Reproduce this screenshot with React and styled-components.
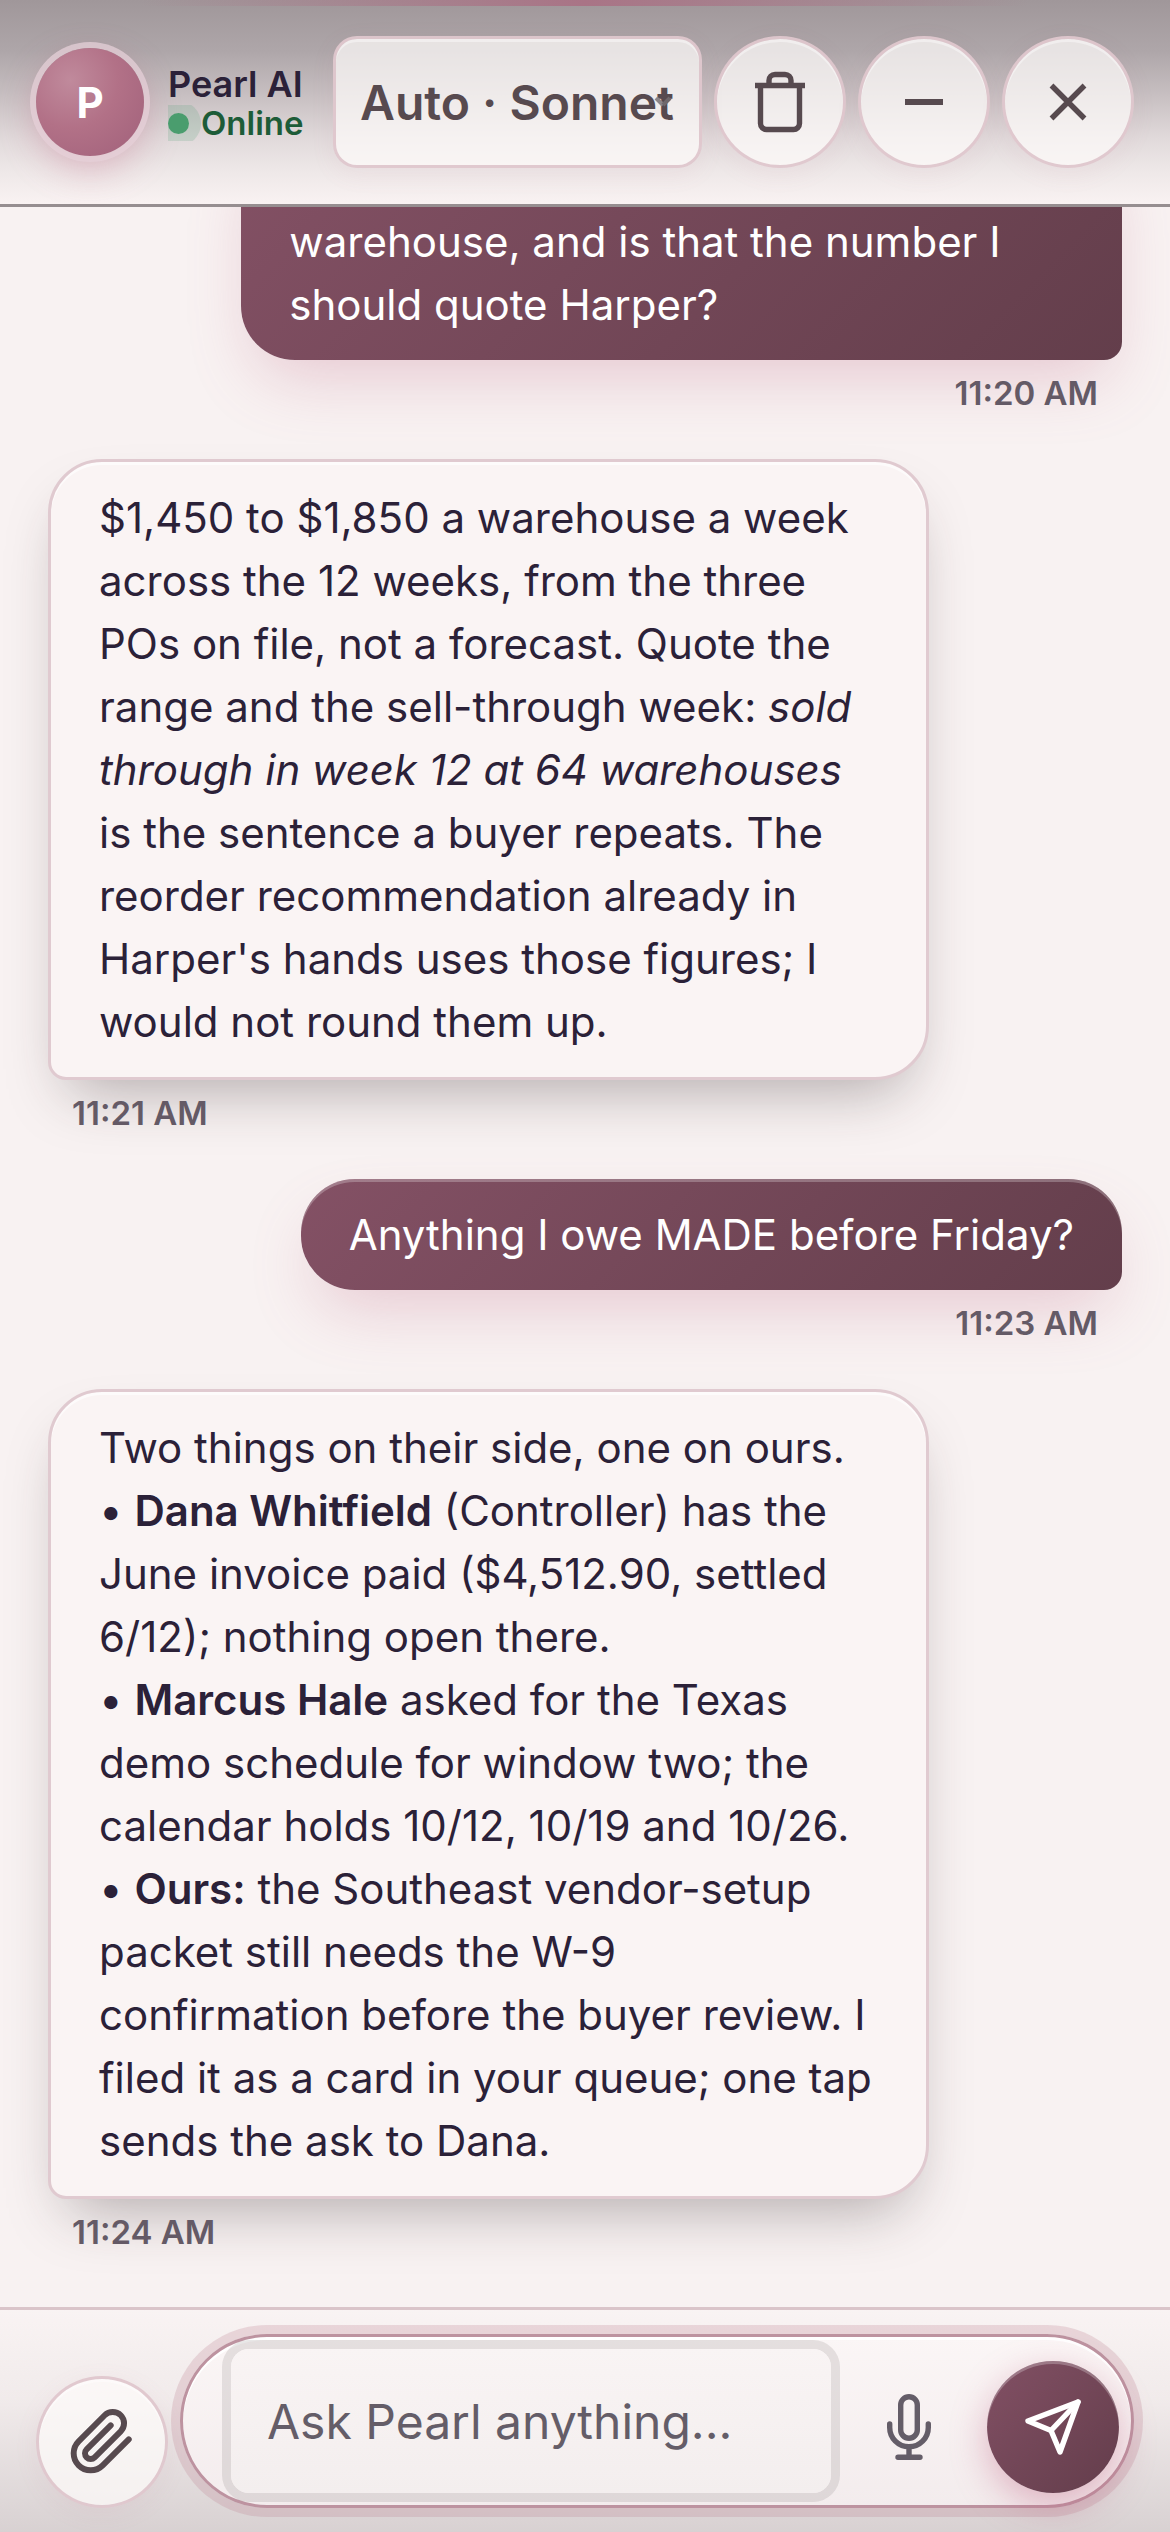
import { useState } from 'react';
import styled, { createGlobalStyle, css } from 'styled-components';

const GlobalStyle = createGlobalStyle`
  *, *::before, *::after {
    box-sizing: border-box;
  }

  body {
    margin: 0;
    background: #f8f2f2;
    color: #2b2138;
    font-family: Inter, "Liberation Sans", sans-serif;
    font-size: 42px;
    line-height: 63px;
  }

  button, input, select {
    font: inherit;
  }
`;

const Screen = styled.div`
  height: 100vh;
  display: flex;
  flex-direction: column;
  overflow: hidden;
`;

const Header = styled.header`
  position: relative;
  z-index: 1;
  flex: none;
  display: flex;
  align-items: center;
  gap: 12px;
  padding: 36px;
  border-bottom: 3px solid #968e90;
  background: linear-gradient(180deg, #a0979a 0%, #aea6a9 25%, #c9c1c3 48%, #e1dadb 68%, #eee8e8 84%, #f9f2f2 100%);

  &::before {
    content: '';
    position: absolute;
    inset: 0 0 auto;
    height: 6px;
    background: linear-gradient(90deg, rgba(170, 115, 132, 0) 12%, #a97486 50%, rgba(170, 115, 132, 0) 88%);
  }
`;

const Avatar = styled.div`
  flex: none;
  display: grid;
  place-items: center;
  width: 108px;
  height: 108px;
  margin: 0 12px 0 0;
  border-radius: 50%;
  background: radial-gradient(circle at 32% 30%, #c08a9c 0%, #b27187 45%, #a0607a 100%);
  box-shadow: 0 0 0 6px rgba(229, 208, 216, 0.75), 0 12px 36px rgba(190, 100, 130, 0.4);
  color: #fff;
  font-size: 42px;
  font-weight: 700;
`;

const Identity = styled.div`
  flex: 1;
  min-width: 0;
`;

const Name = styled.div`
  color: #2b2138;
  font-size: 36px;
  font-weight: 600;
  line-height: 42px;
`;

const Status = styled.div`
  display: flex;
  align-items: center;
  gap: 12px;
  overflow: hidden;
  color: #1d5c38;
  font-size: 33px;
  font-weight: 600;
  line-height: 36px;

  &::before {
    content: '';
    flex: none;
    width: 21px;
    height: 21px;
    border-radius: 50%;
    background: #4a9d6e;
    box-shadow: 0 0 0 12px rgba(74, 157, 110, 0.18);
  }
`;

const surface = css`
  border: 3px solid rgba(217, 190, 197, 0.8);
  background: rgba(253, 251, 249, 0.72);
  box-shadow: inset 0 3px 0 rgba(255, 255, 255, 0.4), 0 6px 24px rgba(190, 120, 140, 0.08);
  color: #574a4f;
`;

const ModelPicker = styled.div`
  position: relative;
  flex: none;
  width: 369px;

  svg {
    position: absolute;
    right: 30px;
    top: 60px;
    pointer-events: none;
  }
`;

const ModelSelect = styled.select`
  ${surface}
  display: block;
  appearance: none;
  width: 100%;
  height: 132px;
  padding: 0 0 0 24px;
  border-radius: 24px;
  font-size: 48px;
  font-weight: 600;
`;

const RoundButton = styled.button`
  ${surface}
  flex: none;
  display: grid;
  place-items: center;
  width: 132px;
  height: 132px;
  padding: 0;
  border-radius: 50%;

  ${({ $variant }) => $variant === 'plain' && css`
    border: 0;
    background: none;
    box-shadow: none;
    color: #645d68;
  `}

  ${({ $variant }) => $variant === 'send' && css`
    border: 0;
    background: linear-gradient(135deg, #825064, #633d4b);
    box-shadow: inset 0 3px 0 rgba(255, 255, 255, 0.25), 0 12px 36px rgba(190, 90, 125, 0.4);
    color: #fff;
  `}
`;

const Thread = styled.main`
  flex: 1;
  min-height: 0;
  display: flex;
  flex-direction: column;
  justify-content: flex-end;
  gap: 42px;
  padding: 0 48px 51px;
`;

const Message = styled.article`
  flex: none;
  display: flex;
  flex-direction: column;
  align-items: ${({ $own }) => ($own ? 'flex-end' : 'flex-start')};
`;

const Bubble = styled.div`
  max-width: 82%;
  padding: 24px 48px;
  border-radius: 54px;

  p {
    margin: 0;
  }

  strong {
    font-weight: 600;
  }

  ${({ $own }) => $own ? css`
    border-bottom-right-radius: 18px;
    background: linear-gradient(135deg, #845165, #633e4b);
    box-shadow: inset 0 3px 0 rgba(255, 255, 255, 0.25), 0 30px 66px -15px rgba(190, 100, 130, 0.3);
    color: #fff;
  ` : css`
    border: 3px solid #e0cad0;
    border-bottom-left-radius: 18px;
    background: #faf4f4;
    box-shadow: inset 0 3px 0 rgba(255, 255, 255, 0.6), 0 30px 60px -21px rgba(50, 38, 42, 0.36);
  `}
`;

const Timestamp = styled.time`
  margin-top: 9px;
  padding: 0 24px;
  color: #645a66;
  font-size: 33px;
  font-weight: 600;
  line-height: 48px;
`;

const Composer = styled.form`
  flex: none;
  display: flex;
  align-items: flex-end;
  gap: 12px;
  padding: 24px 36px;
  border-top: 3px solid #dac5ca;
  background: linear-gradient(180deg, #f9f3f3 0%, #f1ebeb 40%, #d8d1d2 100%);
`;

const InputPill = styled.div`
  flex: 1;
  min-width: 0;
  display: flex;
  align-items: flex-end;
  gap: 12px;
  padding: 12px 12px 12px 48px;
  border: 3px solid #bd93a0;
  border-radius: 87px;
  background: linear-gradient(180deg, #fbf6f6, #f3eced);
  box-shadow: 0 0 0 9px rgba(190, 130, 148, 0.26), inset 0 3px 0 #fff;
`;

const MessageInput = styled.input`
  flex: 1;
  min-width: 0;
  height: 144px;
  padding: 0 36px;
  border: 0;
  border-radius: 18px;
  outline: none;
  background: linear-gradient(180deg, #f9f4f4, #f3eeee);
  box-shadow: 0 0 0 9px rgba(120, 115, 115, 0.17);
  color: #2b2138;
  font-size: 48px;

  &::placeholder {
    color: #645d68;
    opacity: 1;
  }
`;

const TrashIcon = () => (
  <svg width="72" height="72" viewBox="0 0 72 72" fill="none" stroke="currentColor" strokeWidth="5.4" aria-hidden="true">
    <path d="M11 19.500H61M25 19V14.500a6 6 0 0 1 6-6h10a6 6 0 0 1 6 6V19M16.500 20V57.500a6 6 0 0 0 6 6h27a6 6 0 0 0 6-6V20" />
  </svg>
);

const MinusIcon = () => (
  <svg width="72" height="72" viewBox="0 0 72 72" fill="none" stroke="currentColor" strokeWidth="6" aria-hidden="true">
    <path d="M17 36H55" />
  </svg>
);

const CloseIcon = () => (
  <svg width="72" height="72" viewBox="0 0 72 72" fill="none" stroke="currentColor" strokeWidth="5.4" aria-hidden="true">
    <path d="M19.500 19.500L52.500 52.500M52.500 19.500L19.500 52.500" />
  </svg>
);

const ChevronIcon = () => (
  <svg width="18" height="12" viewBox="0 0 18 12" fill="none" strokeWidth="4" aria-hidden="true">
    <path d="M2 2L9 9" stroke="#8c8588" />
    <path d="M9 9L16 2" stroke="#6f686c" />
  </svg>
);

const ClipIcon = () => (
  <svg width="68" height="68" viewBox="0 0 24 24" fill="none" stroke="currentColor" strokeWidth="2.1" strokeLinecap="round" strokeLinejoin="round" aria-hidden="true">
    <path d="M21.440 11.050l-9.190 9.190a6 6 0 0 1-8.490-8.490l9.190-9.190a4 4 0 0 1 5.660 5.660l-9.200 9.190a2 2 0 0 1-2.830-2.830l8.490-8.480" />
  </svg>
);

const MicIcon = () => (
  <svg width="72" height="72" viewBox="0 0 72 72" fill="none" stroke="currentColor" strokeWidth="5.4" strokeLinecap="round" aria-hidden="true">
    <rect x="27.700" y="5.700" width="16.600" height="41.500" rx="8.300" />
    <path d="M16.700 33v3.500a19.300 19.300 0 0 0 38.600 0V33M36 57v9M25 66.300H47" />
  </svg>
);

const SendIcon = () => (
  <svg width="72" height="72" viewBox="0 0 72 72" fill="none" stroke="currentColor" strokeWidth="5.4" strokeLinecap="round" strokeLinejoin="round" aria-hidden="true">
    <path d="M61 11L11 30L34 39.500L43 61Z" />
    <path d="M61 11L34 39.500" />
  </svg>
);

const messages = [
  {
    time: '11:20 AM',
    own: true,
    body: <p>What is the weekly sell-through per warehouse, and is that the number I should quote Harper?</p>,
  },
  {
    time: '11:21 AM',
    body: (
      <p>
        $1,450 to $1,850 a warehouse a week across the 12 weeks, from the three POs on file, not a
        forecast. Quote the range and the sell-through week: <em>sold through in week 12 at 64
        warehouses</em> is the sentence a buyer repeats. The reorder recommendation already in
        Harper's hands uses those figures; I would not round them up.
      </p>
    ),
  },
  {
    time: '11:23 AM',
    own: true,
    body: <p>Anything I owe MADE before Friday?</p>,
  },
  {
    time: '11:24 AM',
    body: (
      <>
        <p>Two things on their side, one on ours.</p>
        <p>• <strong>Dana Whitfield</strong> (Controller) has the June invoice paid ($4,512.90, settled 6/12); nothing open there.</p>
        <p>• <strong>Marcus Hale</strong> asked for the Texas demo schedule for window two; the calendar holds 10/12, 10/19 and 10/26.</p>
        <p>• <strong>Ours:</strong> the Southeast vendor-setup packet still needs the W-9 confirmation before the buyer review. I filed it as a card in your queue; one tap sends the ask to Dana.</p>
      </>
    ),
  },
];

const App = () => {
  const [draft, setDraft] = useState('');

  return (
    <Screen>
      <GlobalStyle />
      <Header>
        <Avatar>P</Avatar>
        <Identity>
          <Name>Pearl AI</Name>
          <Status>Online</Status>
        </Identity>
        <ModelPicker>
          <ModelSelect aria-label="Model">
            <option>Auto · Sonnet</option>
          </ModelSelect>
          <ChevronIcon />
        </ModelPicker>
        <RoundButton type="button" aria-label="Clear chat"><TrashIcon /></RoundButton>
        <RoundButton type="button" aria-label="Minimize"><MinusIcon /></RoundButton>
        <RoundButton type="button" aria-label="Close"><CloseIcon /></RoundButton>
      </Header>

      <Thread>
        {messages.map(({ time, own, body }) => (
          <Message key={time} $own={own}>
            <Bubble $own={own}>{body}</Bubble>
            <Timestamp>{time}</Timestamp>
          </Message>
        ))}
      </Thread>

      <Composer onSubmit={(e) => { e.preventDefault(); setDraft(''); }}>
        <RoundButton type="button" aria-label="Attach file"><ClipIcon /></RoundButton>
        <InputPill>
          <MessageInput
            aria-label="Message"
            placeholder="Ask Pearl anything..."
            value={draft}
            onChange={(e) => setDraft(e.target.value)}
          />
          <RoundButton type="button" $variant="plain" aria-label="Voice input"><MicIcon /></RoundButton>
          <RoundButton type="submit" $variant="send" aria-label="Send"><SendIcon /></RoundButton>
        </InputPill>
      </Composer>
    </Screen>
  );
};

export default App;
